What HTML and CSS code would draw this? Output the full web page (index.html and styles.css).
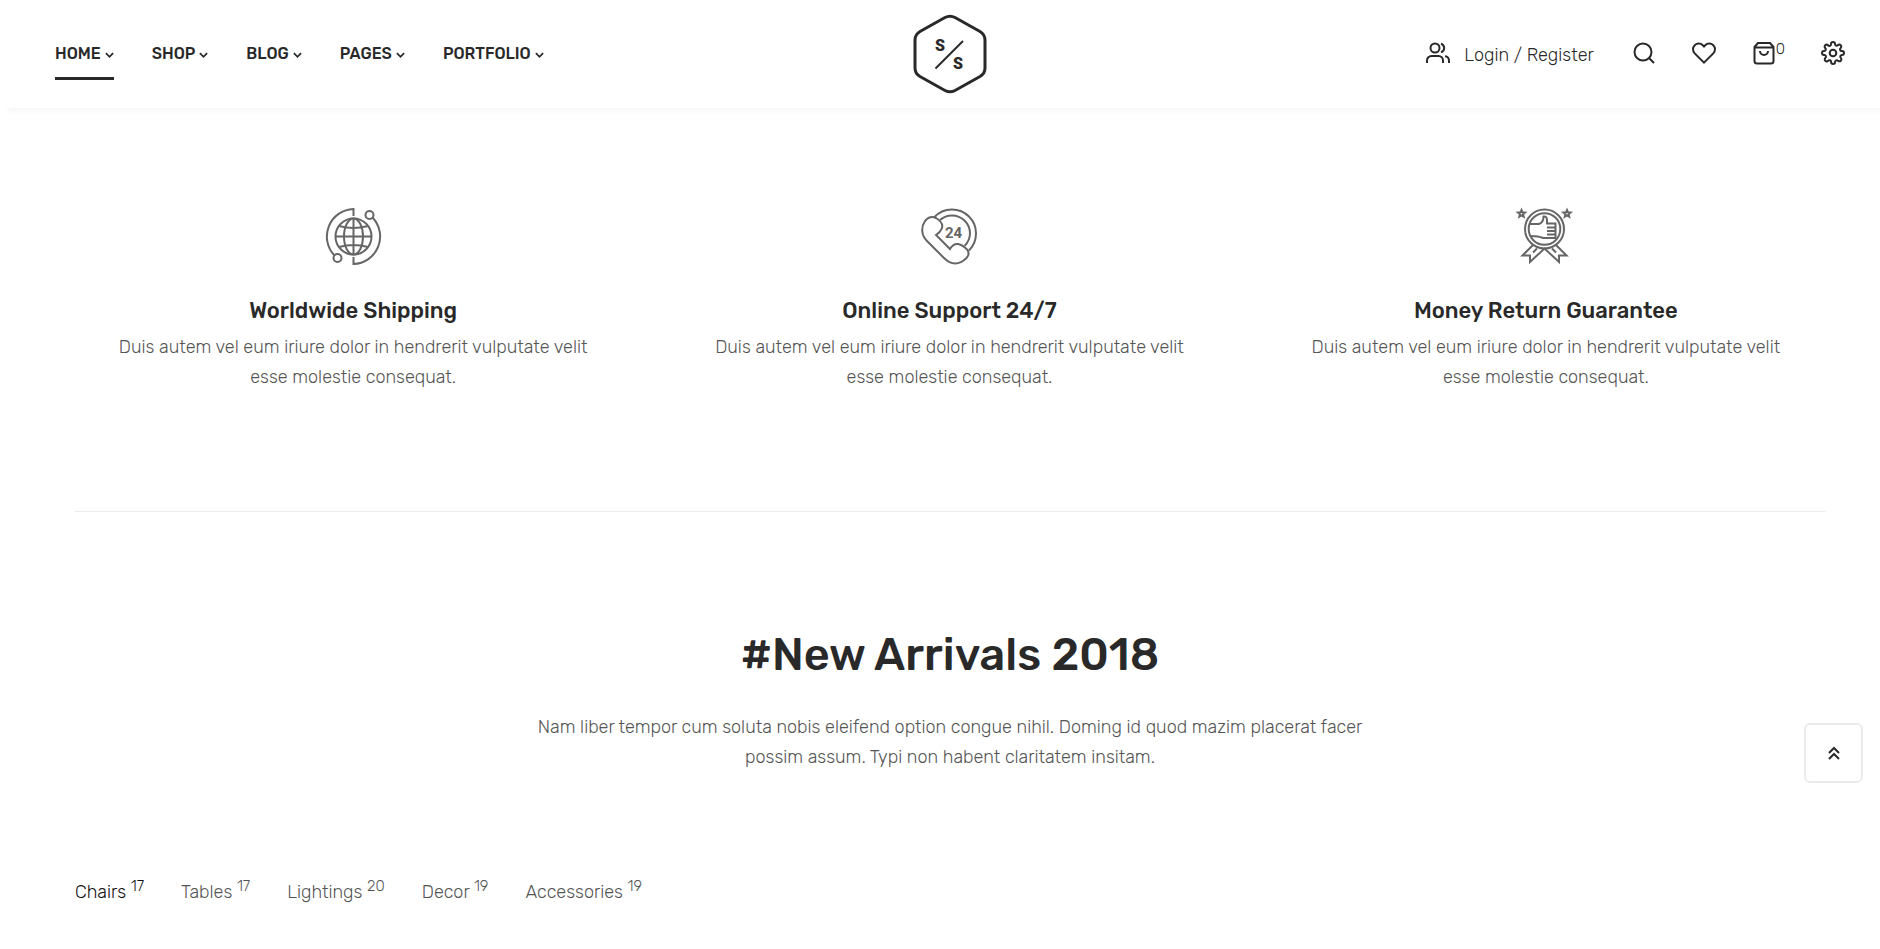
FILE: index.html
```html
<!DOCTYPE html>
<html lang="en">
<head>
  <meta charset="UTF-8" />
  <meta name="viewport" content="width=device-width, initial-scale=1.0" />
  <title>New Arrivals</title>
  <link rel="stylesheet" href="styles.css">
</head>
<body>

  <!-- Header -->
  <header class="header">
    <nav class="main-nav">
      <a href="#" class="active">HOME <svg class="chevron" viewBox="0 0 10 6"><path d="M1 1l4 4 4-4"/></svg></a>
      <a href="#">SHOP <svg class="chevron" viewBox="0 0 10 6"><path d="M1 1l4 4 4-4"/></svg></a>
      <a href="#">BLOG <svg class="chevron" viewBox="0 0 10 6"><path d="M1 1l4 4 4-4"/></svg></a>
      <a href="#">PAGES <svg class="chevron" viewBox="0 0 10 6"><path d="M1 1l4 4 4-4"/></svg></a>
      <a href="#">PORTFOLIO <svg class="chevron" viewBox="0 0 10 6"><path d="M1 1l4 4 4-4"/></svg></a>
    </nav>

    <a href="#" class="logo" aria-label="Home">
      <svg viewBox="0 0 74 80">
        <path class="logo-frame" d="M32 3.5Q37 .8 42 3.5L67 17.5Q72 20.500 72 26V54Q72 59.500 67 62.500L42 76.500Q37 79.200 32 76.500L7 62.500Q2 59.500 2 54V26Q2 20.500 7 17.500Z"/>
        <path class="logo-slash" d="M22.500 54.500L50 27"/>
        <text x="22" y="37">S</text>
        <text x="40" y="55">S</text>
      </svg>
    </a>

    <div class="header-tools">
      <a href="#" class="login">
        <svg class="icon" viewBox="0 0 24 24"><circle cx="9" cy="7" r="4.500"/><path d="M1 22v-2.500a4.500 4.500 0 0 1 4.500-4.500h7a4.500 4.500 0 0 1 4.500 4.500V22M15 2.700a4.500 4.500 0 0 1 0 8.600M19 15.200a4.500 4.500 0 0 1 4 4.500V22"/></svg>
        <span>Login / Register</span>
      </a>
      <button type="button" aria-label="Search">
        <svg class="icon" viewBox="0 0 24 24"><circle cx="11" cy="11" r="8.500"/><path d="M17 17l5 5"/></svg>
      </button>
      <a href="#" aria-label="Wishlist">
        <svg class="icon" viewBox="0 0 24 24"><path d="M21.300 4.300a5.700 5.700 0 0 0-8.100 0L12 5.500l-1.200-1.200a5.700 5.700 0 0 0-8.100 8.100L12 21.700l9.300-9.300a5.700 5.700 0 0 0 0-8.100z"/></svg>
      </a>
      <a href="#" class="cart" aria-label="Cart">
        <svg class="icon" viewBox="0 0 24 24"><path d="M6 2h12l3.500 4v14a2.500 2.500 0 0 1-2.500 2.500H5A2.500 2.500 0 0 1 2.500 20V6zM2.500 6.500h19M8 10a4 4 0 0 0 8 0"/></svg><span class="cart-count">0</span>
      </a>
      <button type="button" aria-label="Settings">
        <svg class="icon" viewBox="0 0 24 24"><circle cx="12" cy="12" r="3.300"/><path d="M19.400 15a1.650 1.650 0 0 0 .33 1.820l.06.060a2 2 0 1 1-2.830 2.830l-.06-.060a1.650 1.650 0 0 0-2.800 1.170V21a2 2 0 0 1-4 0v-.090a1.650 1.650 0 0 0-2.900-1.160l-.06.060a2 2 0 1 1-2.830-2.830l.06-.060A1.650 1.650 0 0 0 3.100 14H3a2 2 0 0 1 0-4h.090a1.650 1.650 0 0 0 1.160-2.900l-.06-.060a2 2 0 1 1 2.830-2.830l.06.060A1.650 1.650 0 0 0 10 3.100V3a2 2 0 0 1 4 0v.090a1.650 1.650 0 0 0 2.800 1.160l.06-.060a2 2 0 1 1 2.830 2.830l-.06.060A1.650 1.650 0 0 0 20.900 10H21a2 2 0 0 1 0 4h-.090a1.650 1.650 0 0 0-1.510 1z"/></svg>
      </button>
    </div>
  </header>

  <main>
    <!-- Services -->
    <section class="services">
      <article class="service">
        <svg class="service-icon" viewBox="0 0 57 57">
          <circle cx="28.500" cy="28.500" r="18"/>
          <ellipse cx="28.500" cy="28.500" rx="9.500" ry="18"/>
          <path d="M28.500 10.500v36M10.500 28.500h36M14 18q14.500 4 29 0M14 39q14.500-4 29 0M28.500 8V1A27.500 27.500 0 0 0 9.500 47.500M28.500 49v7A27.500 27.500 0 0 0 47.500 9.500"/>
          <circle cx="44.500" cy="7" r="4"/>
          <circle cx="12.500" cy="50" r="4"/>
        </svg>
        <h3>Worldwide Shipping</h3>
        <p>Duis autem vel eum iriure dolor in hendrerit vulputate velit esse molestie consequat.</p>
      </article>
      <article class="service">
        <svg class="service-icon" viewBox="0 0 57 57">
          <path d="M13 9.500A24 24 0 0 1 31 1.500A24 24 0 0 1 55 25.500A24 24 0 0 1 48 42.500M19 12A18 18 0 0 1 31 7.500A18 18 0 0 1 49 25.500A18 18 0 0 1 43.700 37.700"/>
          <path d="M4 13Q9 7 15 10C20 13 22.500 17 20.500 21Q19.500 24 15 27L29 41Q32 35.500 37 36Q42 37 46.500 42Q49 46.500 45.500 50C38 57.500 30 57 23 50L6 33C0 27 0 19 4 13Z"/>
          <text x="24" y="30">24</text>
        </svg>
        <h3>Online Support 24/7</h3>
        <p>Duis autem vel eum iriure dolor in hendrerit vulputate velit esse molestie consequat.</p>
      </article>
      <article class="service">
        <svg class="service-icon" viewBox="0 0 57 57">
          <circle cx="27.500" cy="21" r="19.500"/>
          <circle cx="27.500" cy="21" r="15.800"/>
          <path d="M13 16h9q4.500-1.500 4.500-7.500 3.500-.5 3.500 3.500V15.500h8.500V30H26q-4-2-13-2M30 19.500h8.500M30 23h8.500M30 26.500h8.500"/>
          <path d="M16 37L5.500 47.500h7.500v6.500L27.500 40.500 42 54V47.500h7.500L39 37M16 44.500l4-4M39 44.500l-4-4"/>
          <path d="M4.500 2l1 2.300 2.600.3-2 1.700.6 2.500-2.200-1.300-2.200 1.300.6-2.500-2-1.700 2.600-.3zM50 2l1 2.300 2.600.3-2 1.700.6 2.500-2.200-1.300-2.200 1.300.6-2.500-2-1.700 2.600-.3z"/>
        </svg>
        <h3>Money Return Guarantee</h3>
        <p>Duis autem vel eum iriure dolor in hendrerit vulputate velit esse molestie consequat.</p>
      </article>
    </section>

    <!-- New arrivals -->
    <section class="arrivals">
      <div class="section-title">
        <h2>#New Arrivals 2018</h2>
        <p>Nam liber tempor cum soluta nobis eleifend option congue nihil. Doming id quod mazim placerat facer possim assum. Typi non habent claritatem insitam.</p>
      </div>

      <nav class="product-tabs">
        <a href="#" class="active">Chairs <sup>17</sup></a>
        <a href="#">Tables <sup>17</sup></a>
        <a href="#">Lightings <sup>20</sup></a>
        <a href="#">Decor <sup>19</sup></a>
        <a href="#">Accessories <sup>19</sup></a>
      </nav>
    </section>
  </main>

  <button type="button" class="back-to-top" aria-label="Back to top">
    <svg viewBox="0 0 12 14"><path d="M1 7l5-5 5 5M1 13l5-5 5 5"/></svg>
  </button>

</body>
</html>
```
FILE: styles.css
```css
:root {
  --dark: #292929;
  --text: #555555;
  --icon: #666666;
  --line: #ebebeb;
}

* {
  margin: 0;
  padding: 0;
  box-sizing: border-box;
}

body {
  font-family: Rubik, Roboto, sans-serif;
  font-size: 18px;
  font-weight: 300;
  line-height: 30px;
  color: var(--text);
  background: #fff;
}

a {
  color: inherit;
  text-decoration: none;
}

button {
  background: none;
  border: none;
  color: inherit;
  cursor: pointer;
}

svg {
  display: block;
  overflow: visible;
  fill: none;
  stroke: currentColor;
}

/* Header */
.header {
  display: grid;
  grid-template-columns: 1fr auto 1fr;
  align-items: center;
  height: 108px;
  padding: 0 35px 0 55px;
  color: var(--dark);
  background: #fff;
  box-shadow: 8px 4px 5px rgba(0, 0, 0, 0.03);
}

.main-nav {
  display: flex;
  gap: 38px;
}

.main-nav a {
  display: flex;
  align-items: center;
  gap: 4px;
  padding-top: 2px;
  font-size: 16px;
  font-weight: 500;
  line-height: 46px;
  border-bottom: 3px solid transparent;
}

.main-nav a.active {
  border-color: var(--dark);
}

.chevron {
  width: 9px;
  height: 6px;
  margin-top: 3px;
  stroke-width: 2;
}

.logo svg {
  width: 74px;
  height: 80px;
}

.logo-frame {
  stroke-width: 3;
}

.logo-slash {
  stroke-width: 2;
}

.logo text {
  font-family: Roboto, sans-serif;
  font-size: 16px;
  font-weight: 900;
  fill: currentColor;
  stroke: none;
}

.header-tools {
  display: flex;
  justify-content: flex-end;
  align-items: center;
  gap: 36px;
}

.header-tools a {
  display: flex;
  align-items: center;
}

.icon {
  width: 24px;
  height: 24px;
  margin-bottom: 2px;
  stroke-width: 2;
}

.login span {
  margin: 2px 2px 0 14px;
}

.cart-count {
  font-size: 15px;
  line-height: 20px;
  margin-bottom: 10px;
}

/* Services */
.services {
  display: grid;
  grid-template-columns: repeat(3, 1fr);
  margin: 0 36px 0 55px;
  padding: 100px 0 119px;
}

.service {
  display: flex;
  flex-direction: column;
  align-items: center;
  padding: 0 50px;
  text-align: center;
}

.service-icon {
  width: 57px;
  height: 57px;
  margin-bottom: 30px;
  color: var(--icon);
  stroke-width: 2;
}

.service-icon text {
  font-family: Roboto, sans-serif;
  font-size: 15px;
  font-weight: 700;
  fill: currentColor;
  stroke: none;
}

.service h3 {
  margin-bottom: 5px;
  font-size: 22px;
  font-weight: 500;
  line-height: 32px;
  color: var(--dark);
}

/* New arrivals */
.arrivals {
  margin: 0 55px 0 75px;
  padding-top: 113px;
  border-top: 1px solid var(--line);
}

.section-title {
  max-width: 850px;
  margin: 0 auto 105px;
  text-align: center;
}

.section-title h2 {
  margin-bottom: 27px;
  font-size: 45px;
  font-weight: 500;
  line-height: 60px;
  color: var(--dark);
}

.product-tabs {
  display: flex;
  gap: 37px;
}

.product-tabs a.active {
  color: #111;
}

.product-tabs sup {
  font-size: 15px;
  line-height: 0;
}

/* Back to top */
.back-to-top {
  position: fixed;
  right: 17px;
  bottom: 166px;
  display: flex;
  justify-content: center;
  align-items: center;
  width: 59px;
  height: 60px;
  color: var(--dark);
  background: #fff;
  border: 2px solid var(--line);
  border-radius: 6px;
}

.back-to-top svg {
  width: 12px;
  height: 14px;
  stroke-width: 2;
}
```
